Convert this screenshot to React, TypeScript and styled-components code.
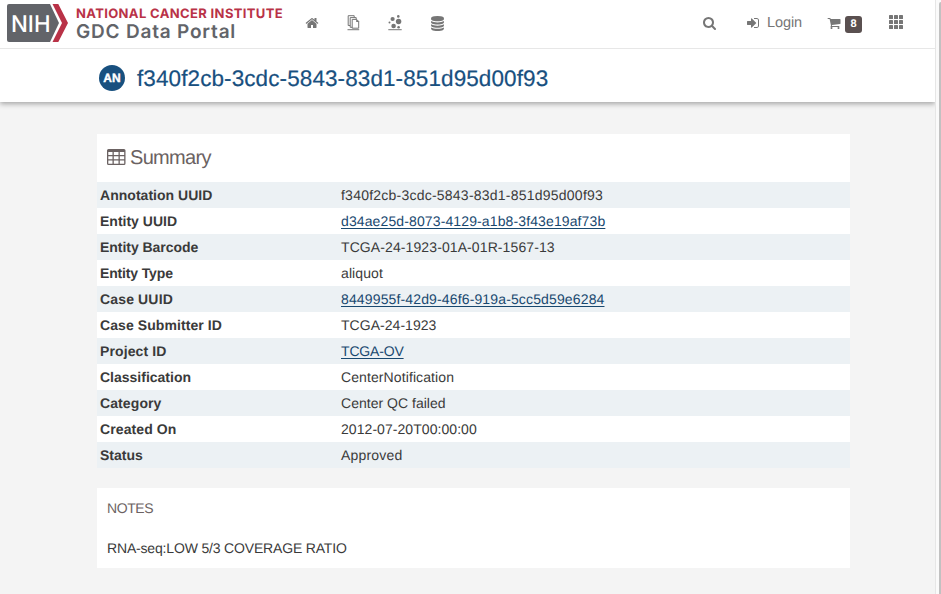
import React from "react";
import styled, { createGlobalStyle } from "styled-components";

const GlobalStyle = createGlobalStyle`
  * { box-sizing: border-box; }
  html, body { margin: 0; padding: 0; }
  body {
    background: #f4f4f4;
    color: #3a3a3a;
    font-family: "Liberation Sans", Arial, sans-serif;
    font-size: 14px;
    text-rendering: geometricPrecision;
    overflow: hidden;
  }
`;

const Window = styled.div`
  display: flex;
  width: 941px;
  height: 594px;
`;

const Page = styled.div`
  width: 935px;
  display: flex;
  flex-direction: column;
`;

const ScrollTrack = styled.div`
  width: 6px;
  padding: 2px 0 0 3px;
  background: #fafafa;
  border-left: 1px solid #e6e6e6;
`;

const ScrollThumb = styled.div`
  height: 600px;
  background: #c1c1c1;
  border-top-left-radius: 3px;
`;

const Header = styled.header`
  height: 49px;
  display: flex;
  background: #fff;
  border-bottom: 1px solid #e7e7e7;
  color: #767676;
`;

const Logo = styled.a`
  display: flex;
  width: 304.5px;
  padding: 3px 0 0 6px;
`;

const LogoText = styled.div`
  padding: 4px 0 0 8px;
  font-family: Inter, sans-serif;
  white-space: nowrap;
`;

const Institute = styled.div`
  height: 15px;
  line-height: 15px;
  font-size: 13px;
  font-weight: 700;
  letter-spacing: 0.36px;
  color: #b93247;
`;

const Portal = styled.div`
  height: 20px;
  line-height: 20px;
  font-size: 19px;
  font-weight: 600;
  letter-spacing: 0.8px;
  color: #626469;
`;

const Nav = styled.nav`
  display: flex;
  height: 46px;
  align-items: center;
  gap: 28.25px;
`;

const Tools = styled.div`
  display: flex;
  align-items: center;
  height: 46px;
  margin: 0 32px 0 auto;
`;

const Tool = styled.a<{ $after?: number; $gap?: number }>`
  display: flex;
  align-items: center;
  gap: ${(p) => p.$gap ?? 0}px;
  margin-right: ${(p) => p.$after ?? 0}px;
  font-size: 14.5px;
  letter-spacing: -0.1px;
`;

const GridTool = styled(Tool)`
  margin-bottom: 2px;
`;

const Glyph = styled.svg`
  display: block;
  flex: none;
  fill: currentColor;
`;

const CartCount = styled.span`
  width: 17px;
  height: 17px;
  margin-top: 3px;
  border-radius: 3px;
  background: #5a5050;
  color: #fff;
  font-size: 11px;
  font-weight: 700;
  line-height: 17px;
  text-align: center;
`;

const TitleBar = styled.div`
  flex: none;
  height: 53px;
  display: flex;
  align-items: center;
  gap: 12px;
  padding: 6px 0 0 99px;
  background: #fff;
  box-shadow: 0 2px 5px rgba(0, 0, 0, 0.32);
  clip-path: inset(0 0 -12px 0);
`;

const EntityBadge = styled.div`
  width: 26px;
  height: 26px;
  margin-bottom: 2px;
  border-radius: 50%;
  background: #18507f;
  color: #fff;
  font-size: 12px;
  font-weight: 700;
  line-height: 27px;
  text-align: center;
  -webkit-text-stroke: 0.4px #fff;
`;

const Title = styled.h1`
  margin: 0;
  font-size: 22.5px;
  font-weight: 400;
  letter-spacing: 0.095px;
  color: #18507f;
  -webkit-text-stroke: 0.2px #18507f;
`;

const Content = styled.main`
  display: flex;
  flex-direction: column;
  gap: 20px;
  width: 753px;
  margin: 32px 0 0 97px;
`;

const Card = styled.section`
  background: #fff;
`;

const CardTitle = styled.h2`
  display: flex;
  gap: 4px;
  height: 48px;
  margin: 0;
  padding: 0 10px;
  align-items: center;
  font-size: 20px;
  font-weight: 400;
  letter-spacing: -0.68px;
  color: #6b6262;
`;

const Row = styled.div`
  display: grid;
  grid-template-columns: 241px 1fr;
  height: 26px;
  padding: 0 3px;
  line-height: 27px;
  &:nth-child(even) {
    background: #ecf1f4;
  }
`;

const Label = styled.div<{ $spacing: number }>`
  font-weight: 700;
  letter-spacing: ${(p) => p.$spacing}px;
`;

const Value = styled.div<{ $spacing: number }>`
  letter-spacing: ${(p) => p.$spacing}px;
`;

const Link = styled.a`
  color: #18486f;
  text-decoration: underline;
  text-underline-offset: 2px;
`;

const Notes = styled(Card)`
  height: 80px;
  padding: 10px;
  line-height: 20px;
  letter-spacing: -0.17px;
`;

const NotesTitle = styled.div`
  height: 40px;
  letter-spacing: -0.4px;
  color: #6b6262;
`;

const TableGlyph = styled(Glyph)`
  margin-bottom: 3px;
`;

const icons = {
  home: "M1472 992v480q0 26-19 45t-45 19h-384v-384h-256v384h-384q-26 0-45-19t-19-45v-480q0-1 .5-3t.5-3l575-474 575 474q1 2 1 6zm223-69l-62 74q-8 9-21 11h-3q-13 0-21-7l-692-577-692 577q-12 8-24 7-13-2-21-11l-62-74q-8-10-7-23.5t11-21.5l719-599q32-26 76-26t76 26l244 204v-195q0-14 9-23t23-9h192q14 0 23 9t9 23v408l219 182q10 8 11 21.5t-7 23.5z",
  search: "M1152 832q0-185-131.5-316.5t-316.5-131.5-316.5 131.5-131.5 316.5 131.5 316.5 316.5 131.5 316.5-131.5 131.5-316.5zm512 832q0 52-38 90t-90 38q-54 0-90-38l-343-342q-179 124-399 124-143 0-273.5-55.5t-225-150-150-225-55.5-273.5 55.5-273.5 150-225 225-150 273.5-55.5 273.5 55.5 225 150 150 225 55.5 273.5q0 220-124 399l343 343q37 37 37 90z",
  database: "M896 768q237 0 443-43t325-127v170q0 69-103 128t-280 93.5-385 34.5-385-34.5-280-93.5-103-128v-170q119 84 325 127t443 43zm0 768q237 0 443-43t325-127v170q0 69-103 128t-280 93.5-385 34.5-385-34.5-280-93.5-103-128v-170q119 84 325 127t443 43zm0-384q237 0 443-43t325-127v170q0 69-103 128t-280 93.5-385 34.5-385-34.5-280-93.5-103-128v-170q119 84 325 127t443 43zm0-1152q208 0 385 34.5t280 93.5 103 128v128q0 69-103 128t-280 93.5-385 34.5-385-34.5-280-93.5-103-128v-128q0-69 103-128t280-93.5 385-34.5z",
  cart: "M704 1536q0 52-38 90t-90 38-90-38-38-90 38-90 90-38 90 38 38 90zm896 0q0 52-38 90t-90 38-90-38-38-90 38-90 90-38 90 38 38 90zm128-1088v512q0 24-16.5 42.5t-40.5 21.5l-1044 122q13 60 13 70 0 16-24 64h920q26 0 45 19t19 45-19 45-45 19h-1024q-26 0-45-19t-19-45q0-11 8-31.5t16-36 21.5-40 15.5-29.5l-177-823h-204q-26 0-45-19t-19-45 19-45 45-19h256q16 0 28.5 6.5t19.5 15.5 13 24.5 8 26 5.5 29.5 4.5 26h1201q26 0 45 19t19 45z",
  signIn: "M1312 896q0 26-19 45l-544 544q-19 19-45 19t-45-19-19-45v-288h-448q-26 0-45-19t-19-45v-384q0-26 19-45t45-19h448v-288q0-26 19-45t45-19 45 19l544 544q19 19 19 45zm352-352v704q0 119-84.5 203.5t-203.5 84.5h-320q-13 0-22.5-9.5t-9.5-22.5q0-4-1-20t-.5-26.5 3-23.5 10-19.5 20.5-6.5h320q66 0 113-47t47-113v-704q0-66-47-113t-113-47h-312l-11.5-1-11.5-3-8-5.5-7-9-2-13.5q0-4-1-20t-.5-26.5 3-23.5 10-19.5 20.5-6.5h320q119 0 203.5 84.5t84.5 203.5z",
};

const Icon = ({ name, size = 14 }: { name: keyof typeof icons; size?: number }) => (
  <Glyph width={size} height={size} viewBox="0 0 1792 1792">
    <path d={icons[name]} />
  </Glyph>
);

const NihMark = () => (
  <Glyph width="62" height="40" viewBox="0 0 62 40">
    <path fill="#626469" d="M3 1H44L53 20 44 39H3Q1 39 1 37V3Q1 1 3 1Z" />
    <path fill="#b93247" d="M46.500 1H52.300L62 20 52.300 39H46.500L56 20Z" />
    <text
      x="5"
      y="28.500"
      fill="#fff"
      fontFamily="Inter, sans-serif"
      fontSize="23"
      fontWeight="500"
      textLength="39.500"
      lengthAdjust="spacingAndGlyphs"
    >
      NIH
    </text>
  </Glyph>
);

const ProjectsIcon = () => (
  <Glyph width="13" height="16" viewBox="0 0 13 16">
    <g fill="#fff" stroke="currentColor" strokeWidth="1">
      <path d="M1.200 .7H7.200V10.500H1.200Z" />
      <path d="M3.200 2.600H9.200V12.300H3.200Z" />
      <path d="M5.200 4.400H9.700L11.700 6.400V13.200H5.200Z" />
    </g>
    <path d="M9.200 4V7H12.200Z" />
    <path d="M.5 14.200H12.200V15.200H.5Z" />
  </Glyph>
);

const ExplorationIcon = () => (
  <Glyph width="14" height="16" viewBox="0 0 14 16">
    <circle cx="10.600" cy="6.500" r="2.700" />
    <circle cx="4.600" cy="4" r="2.100" />
    <circle cx="5.600" cy="11" r="2.300" />
    <circle cx="10.300" cy="1.400" r="1.300" />
    <circle cx="1.500" cy="7.500" r="1" />
    <circle cx="10.600" cy="12.300" r="1.300" />
    <path d="M.3 14.200H13.700V15.200H.3Z" />
  </Glyph>
);

const GridIcon = () => (
  <Glyph width="14" height="14" viewBox="0 0 14 14">
    {[0, 5, 10].flatMap((y) => [0, 5, 10].map((x) => (
      <rect key={`${x}-${y}`} x={x} y={y} width="4" height="4" rx=".6" />
    )))}
  </Glyph>
);

const TableIcon = () => (
  <TableGlyph width="19" height="16" viewBox="0 0 19 16">
    <path fillRule="evenodd" d="M1.500 0H17Q18.500 0 18.500 1.500V14.500Q18.500 16 17 16H1.500Q0 16 0 14.500V1.500Q0 0 1.500 0ZM1.300 3V6H5.500V3ZM6.800 3V6H11.500V3ZM12.800 3V6H17.200V3ZM1.300 7.200V10.300H5.500V7.200ZM6.800 7.200V10.300H11.500V7.200ZM12.800 7.200V10.300H17.200V7.200ZM1.300 11.500V14.700H5.500V11.500ZM6.800 11.500V14.700H11.500V11.500ZM12.800 11.500V14.700H17.200V11.500Z" />
  </TableGlyph>
);

const rows: { label: string; value: string; link?: boolean; ls: number; vs: number }[] = [
  { label: "Annotation UUID", value: "f340f2cb-3cdc-5843-83d1-851d95d00f93", ls: 0.03, vs: 0.23 },
  { label: "Entity UUID", value: "d34ae25d-8073-4129-a1b8-3f43e19af73b", link: true, ls: 0, vs: 0.12 },
  { label: "Entity Barcode", value: "TCGA-24-1923-01A-01R-1567-13", ls: -0.04, vs: 0.1 },
  { label: "Entity Type", value: "aliquot", ls: -0.15, vs: 0.1 },
  { label: "Case UUID", value: "8449955f-42d9-46f6-919a-5cc5d59e6284", link: true, ls: 0.15, vs: 0.14 },
  { label: "Case Submitter ID", value: "TCGA-24-1923", ls: 0.08, vs: 0.04 },
  { label: "Project ID", value: "TCGA-OV", link: true, ls: 0.1, vs: -0.17 },
  { label: "Classification", value: "CenterNotification", ls: 0, vs: 0.1 },
  { label: "Category", value: "Center QC failed", ls: 0.1, vs: 0.02 },
  { label: "Created On", value: "2012-07-20T00:00:00", ls: 0.1, vs: 0.06 },
  { label: "Status", value: "Approved", ls: 0.02, vs: 0.18 },
];

export default function App() {
  return (
    <Window>
      <GlobalStyle />
      <Page>
        <Header>
          <Logo>
            <NihMark />
            <LogoText>
              <Institute>NATIONAL CANCER INSTITUTE</Institute>
              <Portal>GDC Data Portal</Portal>
            </LogoText>
          </Logo>
          <Nav>
            <Icon name="home" />
            <ProjectsIcon />
            <ExplorationIcon />
            <Icon name="database" size={15} />
          </Nav>
          <Tools>
            <Tool $after={29}><Icon name="search" /></Tool>
            <Tool $after={25} $gap={7}><Icon name="signIn" />Login</Tool>
            <Tool $after={27} $gap={4}><Icon name="cart" /><CartCount>8</CartCount></Tool>
            <GridTool><GridIcon /></GridTool>
          </Tools>
        </Header>
        <TitleBar>
          <EntityBadge>AN</EntityBadge>
          <Title>f340f2cb-3cdc-5843-83d1-851d95d00f93</Title>
        </TitleBar>
        <Content>
          <Card>
            <CardTitle><TableIcon />Summary</CardTitle>
            {rows.map((row) => (
              <Row key={row.label}>
                <Label $spacing={row.ls}>{row.label}</Label>
                <Value $spacing={row.vs}>{row.link ? <Link>{row.value}</Link> : row.value}</Value>
              </Row>
            ))}
          </Card>
          <Notes>
            <NotesTitle>NOTES</NotesTitle>
            RNA-seq:LOW 5/3 COVERAGE RATIO
          </Notes>
        </Content>
      </Page>
      <ScrollTrack><ScrollThumb /></ScrollTrack>
    </Window>
  );
}
